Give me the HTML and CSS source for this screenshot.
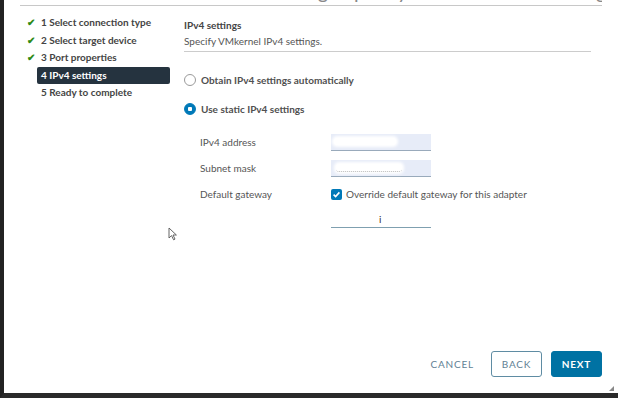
FILE: index.html
```html
<!DOCTYPE html>
<html lang="en">
<head>
    <meta charset="UTF-8">
    <title>Add Networking</title>
    <link rel="stylesheet" href="styles.css">
</head>
<body>
    <div class="frame">
        <div class="header">
            <div class="title">vmk - Add Networking &nbsp; Specify VMkernel IPv4 settings &nbsp; Port properties &nbsp; Ready to go</div>
        </div>

        <div class="main">
            <ul class="steps">
                <li class="step done"><span class="check">&#10004;</span>1 Select connection type</li>
                <li class="step done"><span class="check">&#10004;</span>2 Select target device</li>
                <li class="step done"><span class="check">&#10004;</span>3 Port properties</li>
                <li class="step active">4 IPv4 settings</li>
                <li class="step">5 Ready to complete</li>
            </ul>

            <div class="content">
                <div class="page-head">
                    <p class="page-title">IPv4 settings</p>
                    <p class="page-desc">Specify VMkernel IPv4 settings.</p>
                </div>

                <div class="radio-row first">
                    <span class="radio"></span>
                    <span>Obtain IPv4 settings automatically</span>
                </div>
                <div class="radio-row">
                    <span class="radio on"></span>
                    <span>Use static IPv4 settings</span>
                </div>

                <div class="form">
                    <div class="form-row">
                        <span class="label">IPv4 address</span>
                        <span class="input"><span class="blur b1"></span></span>
                    </div>
                    <div class="form-row">
                        <span class="label">Subnet mask</span>
                        <span class="input"><span class="blur b2"></span></span>
                    </div>
                    <div class="form-row">
                        <span class="label">Default gateway</span>
                        <span class="checkbox">
                            <svg width="11" height="11" viewBox="0 0 11 11"><rect width="11" height="11" rx="2" fill="#0079b8"/><path d="M2.6 5.6 L4.6 7.5 L8.4 3.4" fill="none" stroke="#fff" stroke-width="1.6"/></svg>
                        </span>
                        <span class="check-label">Override default gateway for this adapter</span>
                    </div>
                    <div class="form-row">
                        <span class="label"></span>
                        <span class="input plain"><span class="caret">i</span></span>
                    </div>
                </div>
            </div>
        </div>

        <div class="footer">
            <button class="btn link">CANCEL</button>
            <button class="btn outline">BACK</button>
            <button class="btn primary">NEXT</button>
            <span class="grip"></span>
        </div>

        <svg class="pointer" width="10" height="14" viewBox="0 0 10 14">
            <path d="M1 1 L1 11 L3.5 8.6 L5.6 12.8 L7 12.1 L5 8 L8.4 8 Z" fill="#fff" stroke="#555" stroke-width="0.9"/>
        </svg>
    </div>
</body>
</html>
```

FILE: styles.css
```css
body {
    margin: 0;
    font-family: Lato, "Open Sans", sans-serif;
    font-size: 10px;
    color: #444;
    background: #fff;
}
p {
    margin: 0;
}
.frame {
    position: relative;
    height: 393px;
    border-left: 4px solid #222;
    border-bottom: 5px solid #2a2a2a;
    display: flex;
    flex-direction: column;
}
.header {
    height: 5px;
    overflow: hidden;
    margin: 0 16px 0 16px;
    border-bottom: 1px solid #c8c8c8;
}
.title {
    font-size: 20px;
    line-height: 20px;
    margin-top: -19px;
    padding-left: 110px;
    color: #888;
    white-space: nowrap;
}
.main {
    display: flex;
    flex: 1;
}
.steps {
    list-style: none;
    margin: 0;
    padding: 8px 0 0 0;
    width: 166px;
}
.step {
    height: 17.5px;
    line-height: 17.5px;
    padding-left: 37px;
    font-weight: bold;
    color: #444;
    position: relative;
}
.check {
    position: absolute;
    left: 23px;
    color: #2e8a15;
    font-size: 10px;
}
.step.active {
    background: #25333f;
    color: #fff;
    margin-left: 33px;
    padding-left: 4px;
    border-radius: 2px;
}
.content {
    padding-left: 14px;
    flex: 1;
}
.page-head {
    margin-top: 11px;
    width: 407px;
    border-bottom: 1px solid #ccc;
    padding-bottom: 2px;
}
.page-title {
    font-weight: bold;
    color: #444;
    line-height: 16px;
}
.page-desc {
    color: #555;
    line-height: 16px;
}
.radio-row {
    display: flex;
    align-items: center;
    gap: 5px;
    height: 29px;
    font-weight: bold;
    color: #505050;
}
.radio-row.first {
    margin-top: 13px;
}
.radio {
    width: 10px;
    height: 10px;
    border: 1px solid #9a9a9a;
    border-radius: 50%;
}
.radio.on {
    border-color: #0079b8;
    background: radial-gradient(circle, #fff 0 2px, #0079b8 2.5px);
}
.form {
    margin-top: 6px;
    margin-left: 16px;
}
.form-row {
    display: flex;
    align-items: center;
    height: 26px;
}
.label {
    width: 131px;
    color: #555;
}
.input {
    position: relative;
    width: 100px;
    height: 16px;
    background: #e7ecf8;
    border-bottom: 1px solid #9ab;
}
.input.plain {
    background: #fff;
    border-bottom-color: #7fa0b0;
    margin-top: -2px;
}
.blur {
    position: absolute;
    top: 4px;
    height: 7px;
    background: #fff;
    box-shadow: 0 0 3px 2px #fff;
    border-radius: 3px;
}
.b1 {
    left: 3px;
    width: 62px;
}
.b2 {
    left: 5px;
    width: 66px;
    border-bottom: 1px dotted #bbb;
}
.caret {
    position: absolute;
    left: 48px;
    top: 2px;
    font-size: 10px;
    line-height: 12px;
    color: #333;
}
.checkbox {
    height: 11px;
    margin-right: 4px;
}
.check-label {
    color: #555;
}
.footer {
    display: flex;
    justify-content: flex-end;
    align-items: center;
    gap: 9px;
    padding: 0 16px 16px 0;
    position: relative;
}
.btn {
    font-family: Lato, "Open Sans", sans-serif;
    font-size: 10px;
    font-weight: bold;
    letter-spacing: 0.8px;
    height: 26px;
    border-radius: 3px;
    padding: 0 8px;
    cursor: pointer;
}
.btn.link {
    background: none;
    border: none;
    color: #5f7f94;
    font-weight: normal;
    margin-right: 0;
}
.btn.outline {
    width: 51px;
    background: #fff;
    border: 1px solid #5f8ca3;
    color: #5f7f94;
    font-weight: normal;
}
.btn.primary {
    width: 51px;
    background: #0072a3;
    border: 1px solid #0072a3;
    color: #fff;
}
.grip {
    position: absolute;
    right: 4px;
    bottom: 2px;
    width: 0;
    height: 0;
    border-left: 5px solid transparent;
    border-bottom: 5px solid #888;
}
.pointer {
    position: absolute;
    left: 164px;
    top: 227px;
}
```
